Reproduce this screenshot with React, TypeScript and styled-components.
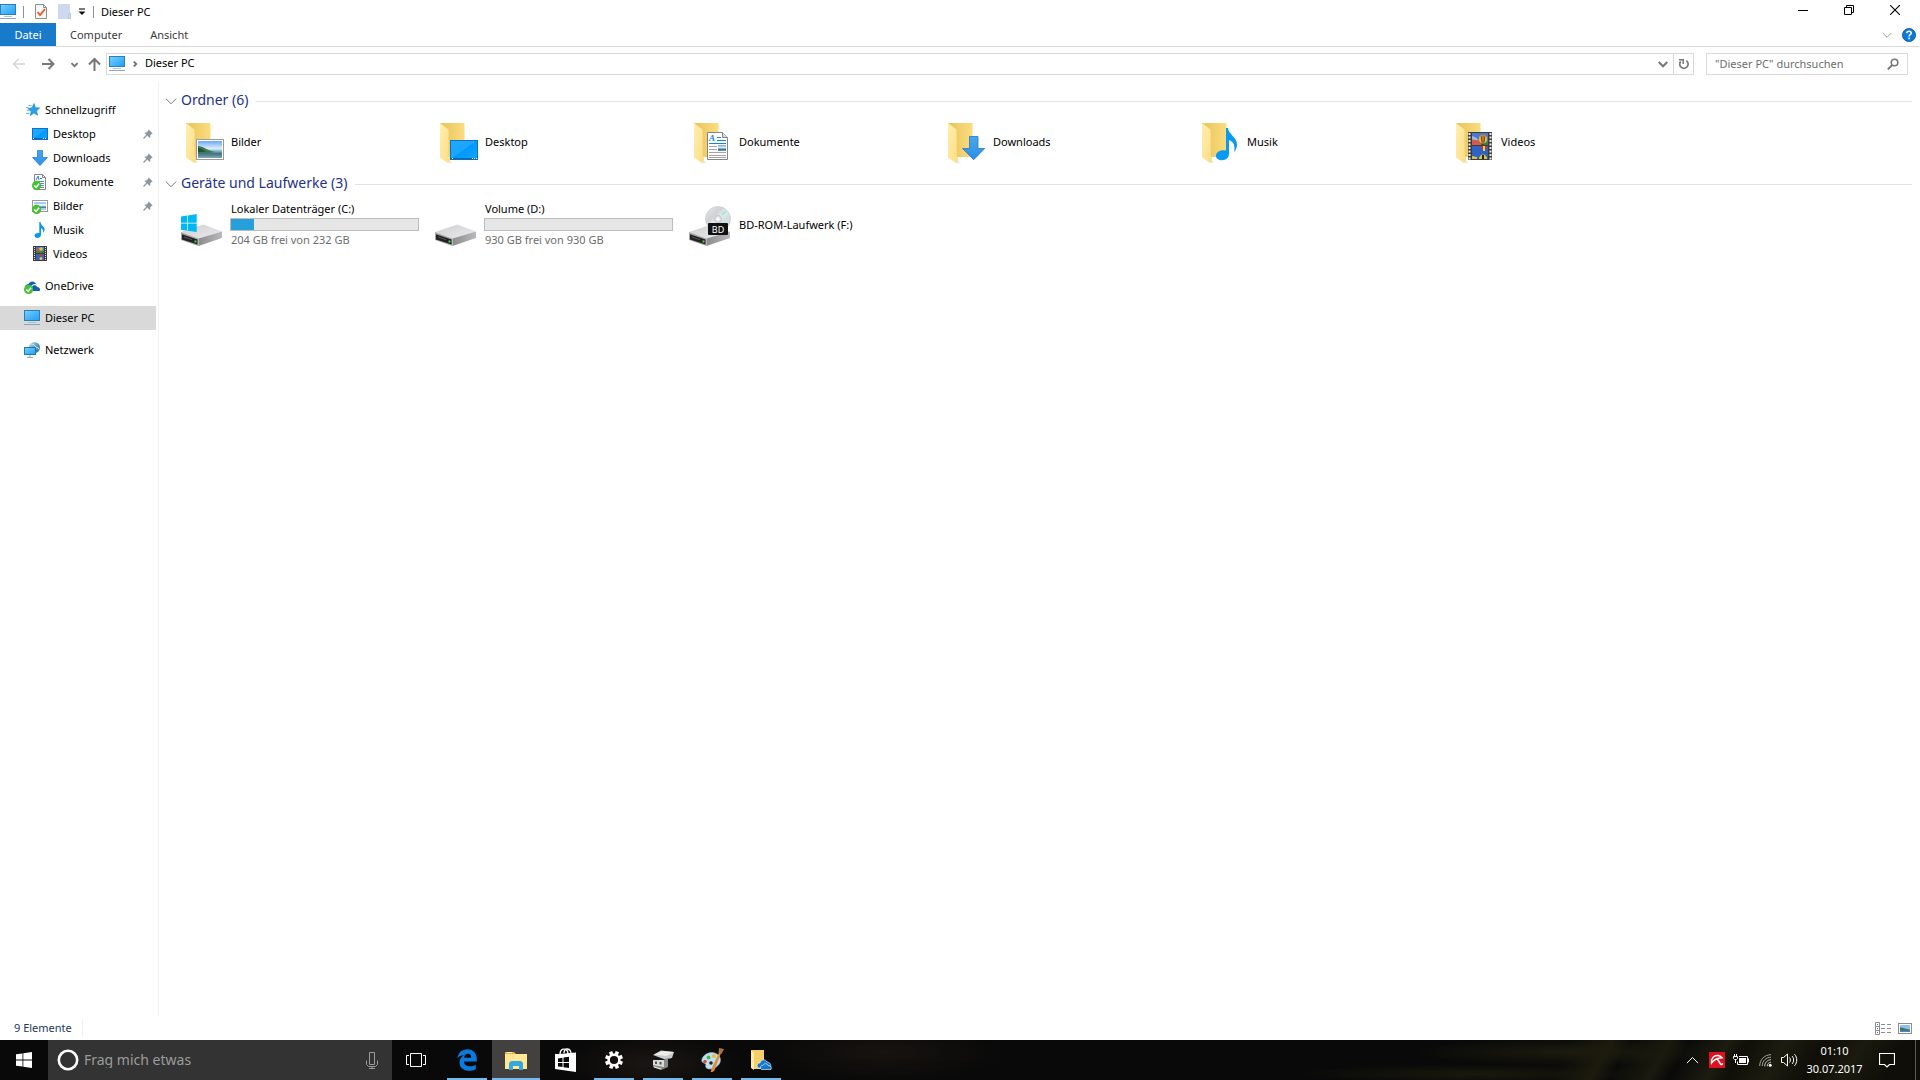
import React, { useState } from 'react';
import styled, { createGlobalStyle } from 'styled-components';

const GlobalStyle = createGlobalStyle`
  *, *::before, *::after { box-sizing: border-box; }
  body { margin: 0; background: #fff; color: #000; font: 11px/16px "Noto Sans", "Open Sans", sans-serif; }
  button, input { font: inherit; color: inherit; margin: 0; padding: 0; border: 0; border-radius: 0; background: none; }
  button { cursor: default; }
  a { color: inherit; text-decoration: none; }
  ul, h1, h2, p { margin: 0; padding: 0; list-style: none; font: inherit; }
  svg { display: block; flex: none; }
`;

/* ---------- layout ---------- */

const Screen = styled.div`
  display: flex;
  flex-direction: column;
  min-height: 100vh;
`;

const Explorer = styled.main`
  flex: 1;
  display: flex;
  flex-direction: column;
`;

const TitleBar = styled.header`
  display: flex;
  align-items: center;
  height: 23px;
`;

const QuickTools = styled.div`
  display: flex;
  align-items: center;
  gap: 7px;
`;

const Divider = styled.span`
  width: 1px;
  height: 12px;
  background: #8f8f8f;
`;

const IconButton = styled.button<{ $w?: number }>`
  display: flex;
  align-items: center;
  justify-content: center;
  width: ${p => (p.$w ? `${p.$w}px` : 'auto')};
  height: 20px;
`;

const WindowTitle = styled.h1`
  padding-left: 7px;
`;

const WindowButtons = styled.div`
  display: flex;
  margin-left: auto;
  padding-right: 2px;
  align-self: flex-start;
`;

const Ribbon = styled.div`
  display: flex;
  height: 24px;
  border-bottom: 1px solid #dadbdc;
`;

const RibbonTab = styled.button<{ $primary?: boolean }>`
  min-width: 56px;
  padding: 0 14px;
  color: ${p => (p.$primary ? '#fff' : '#3b3b3b')};
  background: ${p => (p.$primary ? '#1979ca' : 'transparent')};
`;

const RibbonTools = styled.div`
  display: flex;
  align-items: center;
  gap: 10px;
  margin-left: auto;
  padding-right: 4px;
`;

const AddressRow = styled.div`
  display: flex;
  align-items: center;
  height: 34px;
  padding-right: 12px;
`;

const History = styled.div`
  display: flex;
  align-items: center;
  gap: 10px;
  width: 106px;
  padding-left: 12px;
`;

const AddressBox = styled.div`
  flex: 1;
  display: flex;
  align-items: center;
  height: 22px;
  padding-left: 2px;
  border: 1px solid #d9d9d9;
`;

const Crumbs = styled.nav`
  flex: 1;
  display: flex;
  align-items: center;
  gap: 7px;
`;

const Crumb = styled.a`
  padding-bottom: 2px;
`;

const Refresh = styled(IconButton)`
  border-left: 1px solid #d9d9d9;
`;

const SearchBox = styled.label`
  display: flex;
  align-items: center;
  width: 202px;
  height: 22px;
  margin-left: 12px;
  padding: 0 8px;
  border: 1px solid #d9d9d9;
`;

const SearchInput = styled.input<{ $big?: boolean }>`
  flex: 1;
  min-width: 0;
  outline: none;
  color: ${p => (p.$big ? '#fff' : '#222')};
  font-size: ${p => (p.$big ? '14px' : '11px')};
  &::placeholder { color: ${p => (p.$big ? '#9c9c9c' : '#6d6d6d')}; opacity: 1; }
`;

const Body = styled.div`
  flex: 1;
  display: flex;
`;

const Sidebar = styled.nav`
  width: 159px;
  padding: 17px 2px 0 0;
  border-right: 1px solid #f2f2f2;
`;

const NavGroup = styled.ul`
  margin-bottom: 8px;
`;

const NavLink = styled.a<{ $child?: boolean; $active?: boolean }>`
  display: flex;
  align-items: center;
  height: 24px;
  gap: 5px;
  padding: 0 3px 0 ${p => (p.$child ? '32px' : '24px')};
  background: ${p => (p.$active ? '#d9d9d9' : 'transparent')};
`;

const NavLabel = styled.span`
  flex: 1;
`;

const Content = styled.section`
  flex: 1;
  min-width: 0;
  padding: 8px 8px 0 6px;
`;

const GroupHeader = styled.h2`
  display: flex;
  align-items: center;
  height: 24px;
  gap: 4px;
  color: #1e3287;
  font-size: 14px;
  line-height: 20px;
  &::after { content: ""; flex: 1; height: 1px; margin-left: 4px; background: #e2e2e2; }
`;

const GroupTitle = styled.span`
  padding-bottom: 2px;
`;

const Tiles = styled.div`
  display: grid;
  grid-template-columns: repeat(auto-fill, 254px);
  padding: 5px 0 6px 8px;
`;

const Tile = styled.button`
  display: flex;
  align-items: center;
  gap: 3px;
  height: 48px;
  padding-left: 6px;
  text-align: left;
`;

const TileText = styled.span`
  display: flex;
  flex-direction: column;
  flex: none;
  width: 189px;
`;

const Label = styled.span<{ $muted?: boolean }>`
  padding: 0 0 ${p => (p.$muted ? '2px' : 0)} 1px;
  color: ${p => (p.$muted ? '#6d6d6d' : '#000')};
`;

const Bar = styled.span`
  height: 13px;
  margin: 1px 0;
  border: 1px solid #bcbcbc;
  background: #e6e6e6;
`;

const BarFill = styled.span`
  display: block;
  height: 100%;
  background: #26a0da;
`;

const StatusBar = styled.footer`
  display: flex;
  align-items: center;
  justify-content: space-between;
  height: 24px;
  padding: 0 8px 0 14px;
  color: #1e395b;
`;

const StatusText = styled.span`
  padding-right: 10px;
  border-right: 1px solid #f0f0f0;
`;

const ViewButtons = styled.div`
  display: flex;
  gap: 7px;
`;

/* ---------- taskbar ---------- */

const Taskbar = styled.footer`
  display: flex;
  height: 40px;
  color: #fff;
  background:
    linear-gradient(120deg, transparent 81%, #1c1b0e 83%, transparent 84%, #1b1a0e 86%, transparent 87%, #1d1c10 89%, #100f08 90%, #1d1c10 92%, #0f0e08 94%, #1b1a0f 96%, #0f0e08 98%),
    radial-gradient(ellipse 160px 14px at 82% 30%, #1d1c0e, transparent),
    radial-gradient(ellipse 180px 10px at 77% 85%, #1a190d, transparent),
    radial-gradient(ellipse 90px 30px at 34% 60%, #1b1613, transparent),
    radial-gradient(ellipse 120px 30px at 46% 30%, #17130f, transparent),
    #090909;
`;

const TaskSearch = styled.label`
  display: flex;
  align-items: center;
  width: 344px;
  gap: 5px;
  padding: 0 14px 0 9px;
  background: #333;
`;

const TaskButton = styled.button<{ $open?: boolean; $active?: boolean }>`
  display: flex;
  align-items: center;
  justify-content: center;
  width: 48px;
  background: ${p => (p.$active ? '#424140' : 'transparent')};
  background-image: ${p => (p.$open || p.$active ? 'linear-gradient(#76b9ed, #76b9ed)' : 'none')};
  background-repeat: no-repeat;
  background-position: center bottom;
  background-size: ${p => (p.$active ? '48px 2px' : '40px 2px')};
`;

const Apps = styled.div`
  display: flex;
  gap: 1px;
  margin-left: 3px;
`;

const Tray = styled.div`
  display: flex;
  align-items: center;
  gap: 8px;
  margin-left: auto;
`;

const Clock = styled.time`
  width: 57px;
  line-height: 18px;
  text-align: center;
  white-space: nowrap;
`;

const ActionCenter = styled.button`
  padding: 0 20px 0 8px;
`;

const ShowDesktop = styled.button`
  width: 5px;
  height: 40px;
  border-left: 1px solid #5a5a52;
`;

const Defs = styled.svg`
  position: absolute;
`;

/* ---------- icons ---------- */

type S = { children: React.ReactNode; w?: number; h?: number; box?: string };
const Svg = ({ children, w = 16, h = w, box }: S) => (
  <svg width={w} height={h} viewBox={box ?? `0 0 ${w} ${h}`} fill="none" aria-hidden="true">{children}</svg>
);

const Gradients = () => (
  <Defs width="0" height="0" aria-hidden="true">
    <defs>
      <linearGradient id="screen" x1="0" y1="0" x2="1" y2="1"><stop offset="0" stopColor="#7fd0fb" /><stop offset=".5" stopColor="#49b7fb" /><stop offset="1" stopColor="#219ffa" /></linearGradient>
      <linearGradient id="desk" x1="0" y1="0" x2="1" y2="1"><stop offset="0" stopColor="#22a8ff" /><stop offset=".48" stopColor="#1ba5ff" /><stop offset=".5" stopColor="#0099ff" /><stop offset="1" stopColor="#18a3ff" /></linearGradient>
      <linearGradient id="back" x1="0" y1="0" x2="1" y2="0"><stop offset="0" stopColor="#e8c35a" /><stop offset="1" stopColor="#fbdc7f" /></linearGradient>
      <linearGradient id="flap" x1="0" y1="0" x2="1" y2="1"><stop offset="0" stopColor="#ffefb0" /><stop offset="1" stopColor="#fcdc83" /></linearGradient>
      <linearGradient id="sky" x1="0" y1="0" x2="0" y2="1"><stop offset="0" stopColor="#6ca8f4" /><stop offset=".45" stopColor="#dbeefa" /><stop offset=".6" stopColor="#7fb0c4" /><stop offset=".75" stopColor="#3f7280" /><stop offset="1" stopColor="#7fa9bd" /></linearGradient>
      <linearGradient id="arrow" x1="0" y1="0" x2="0" y2="1"><stop offset="0" stopColor="#4aa5ee" /><stop offset="1" stopColor="#2c8fe6" /></linearGradient>
      <linearGradient id="metal" x1="0" y1="0" x2="1" y2="1"><stop offset="0" stopColor="#cfcfd1" /><stop offset="1" stopColor="#ebebed" /></linearGradient>
      <linearGradient id="side" x1="0" y1="0" x2="1" y2="0"><stop offset="0" stopColor="#8c8c8e" /><stop offset="1" stopColor="#b9b9bb" /></linearGradient>
      <linearGradient id="disc" x1="0" y1="0" x2="1" y2="1"><stop offset="0" stopColor="#e9ecee" /><stop offset=".35" stopColor="#cdd2d4" /><stop offset=".5" stopColor="#efe6f2" /><stop offset=".65" stopColor="#d0e2de" /><stop offset="1" stopColor="#d5d8da" /></linearGradient>
      <linearGradient id="globe" x1="0" y1="0" x2="1" y2="1"><stop offset="0" stopColor="#bfe6f2" /><stop offset=".5" stopColor="#5aa0bd" /><stop offset="1" stopColor="#2d6d92" /></linearGradient>
    </defs>
  </Defs>
);

const Monitor = () => (
  <Svg><rect x=".5" y=".5" width="15" height="10" fill="url(#screen)" stroke="#2a7fb5" /><path d="M4 12.5h8" stroke="#a9c4d6" /><path d="M0 14.5h16" stroke="#8ea5b8" /></Svg>
);
const Chevron = ({ w = 10, color = '#777', sw = 1, dir = 'down' }: { w?: number; color?: string; sw?: number; dir?: 'down' | 'up' | 'right' }) => (
  <Svg w={w} box="0 0 10 10"><path d={dir === 'down' ? 'M.7 3 5 7.3 9.3 3' : dir === 'up' ? 'M.7 7 5 2.7 9.3 7' : 'M3 1l4 4-4 4'} stroke={color} strokeWidth={(sw * 10) / w} /></Svg>
);
const CheckDoc = () => (
  <Svg w={12} h={15}><path d="M.5.5h8l3 3v11H.5z" fill="#f8f8f8" stroke="#8e8e8e" /><path d="M8.500.5v3h3" stroke="#8e8e8e" /><path d="m2.500 8 2.500 3 5-6" stroke="#e8581c" strokeWidth="1.800" /></Svg>
);
const NewFolder = () => <Svg w={13} h={15}><path d="M0 0h12v9h1v6H0z" fill="#ccd9ee" /><path d="M10.500 14.500v-5h2v5z" stroke="#b9cae6" /></Svg>;
const Customize = () => <Svg w={8} h={8}><path d="M1 1h6" stroke="#222" strokeWidth="1.200" /><path d="M.5 3.500h7L4 7z" fill="#111" /></Svg>;
const Arrow = ({ kind }: { kind: 'back' | 'forward' | 'up' }) => (
  <Svg w={13} h={14}>
    <path d={kind === 'back' ? 'M13 7H1.500M6.500 2 1.500 7l5 5' : kind === 'forward' ? 'M0 7h11.500M6.500 2l5 5-5 5' : 'M6.500 14V2M1 7.500l5.500-5.500L12 7.500'} stroke={kind === 'back' ? '#d5d5d5' : '#777'} strokeWidth={kind === 'back' ? 1.5 : 2} />
  </Svg>
);
const ReloadIcon = () => <Svg w={12}><path d="M8.300 2.600A4.200 4.200 0 1 1 2.700 3.400" stroke="#777" strokeWidth="1.700" /><path d="M1 1.800h4.200V6" stroke="#777" strokeWidth="1.500" /></Svg>;
const Magnifier = () => <Svg w={12}><circle cx="7.500" cy="4.500" r="3.300" stroke="#777" strokeWidth="1.600" /><path d="M5.200 7 .8 11.400" stroke="#777" strokeWidth="1.900" /></Svg>;
const Help = () => <Svg w={14}><circle cx="7" cy="7" r="6.600" fill="#0f78d4" stroke="#0a5ca8" strokeWidth=".8" /><path d="M4.900 5.200c0-2.600 4.300-2.600 4.300 0 0 1.500-2.100 1.500-2.100 3.200M7.100 9.600v1.600" stroke="#fff" strokeWidth="1.500" /></Svg>;
const Minimize = () => <Svg w={10}><path d="M0 5.500h10" stroke="#000" /></Svg>;
const Restore = () => <Svg w={10}><path d="M.5 2.500h7v7h-7zM2.500 2.500v-2h7v7h-2" stroke="#000" /></Svg>;
const Close = () => <Svg w={10}><path d="m0 0 10 10M10 0 0 10" stroke="#000" strokeWidth="1.100" /></Svg>;
const Pin = () => <Svg w={10}><path d="M5.500.3 9.700 4.500 8.500 5 7.300 6.200c.3 1.200 0 2-.5 2.700L1.500 4c.8-.8 1.700-1 2.600-.8L5.200 1.800z" fill="#8b969e" /><path d="M4 6 0.500 9.500" stroke="#8b969e" strokeWidth="1.200" /></Svg>;

const Star = () => (
  <Svg><path d="m10 1.500 1.500 4.200 4.200.2-3.100 3 1 4.400-3.800-2.200-3.500 2.700.9-4.500L3.800 6.600l4.200-.8z" fill="#2aa0ea" stroke="#1c83cb" strokeWidth=".6" /><path d="M4.500 3.500h3M2 5.500h2.500M3 8.500h2.500M2 11.500h3.500" stroke="#67b7e8" /></Svg>
);
const DesktopSmall = () => <Svg><rect x=".5" y="2.500" width="15" height="11" fill="url(#desk)" stroke="#0a72c0" /><path d="M1 12.500h14" stroke="#0b69b1" /><path d="M1 12.500h1M11 12.500h1m1 0h1" stroke="#fff" /></Svg>;
const DownSmall = () => <Svg><path d="M5.500.5h5v7h5L8 15.500.5 7.500h5z" fill="url(#arrow)" stroke="#2b7fcb" strokeWidth=".8" /></Svg>;
const Badge = () => <><circle cx="4.600" cy="11.400" r="4.600" fill="#46c132" /><path d="m2.300 11.400 1.800 1.900 3-3.600" stroke="#fff" strokeWidth="1.500" /></>;
const DocSmall = () => (
  <Svg><path d="M2.500.5h8l3 3v12h-11z" fill="#fdfdfd" stroke="#858585" /><path d="M10.500.5v3h3" stroke="#858585" /><path d="m4 6 2-4 1 4M8 4.500h2" stroke="#1f87d5" /><path d="M4 7.500h8M8 9.500h4M8 11.500h4M8 13.500h4" stroke="#5790c0" /><Badge /></Svg>
);
const PicSmall = () => <Svg><rect x=".5" y="2.500" width="15" height="11" fill="#fff" stroke="#9a9a9a" /><path d="M2 4h12v8H2z" fill="#a9ccf7" /><path d="M2 6h12v2H2z" fill="#e2eefb" /><path d="M6 8.500h8V10H6z" fill="#4d7f9a" /><Badge /></Svg>;
const NoteSmall = () => <Svg><path d="M7.300 0h1.300c.2 3.600 4 4.400 4 7.600 0 1.500-.7 2.700-1.400 3.400.5-2.400-.4-4-2.200-4.700v6.400c0 1.700-1.500 3.200-3.600 3.200-1.700 0-2.900-.9-2.900-2.300 0-1.700 1.900-3.100 4.800-2.600z" fill="#0a98ef" /></Svg>;
const VideoSmall = () => (
  <Svg><rect x="1" y="0" width="14" height="15" fill="#3a3a3a" /><path d="M2.500 1v14M13.500 1v14" stroke="#e8e8e8" strokeDasharray="1 1" /><rect x="4" y="1" width="8" height="6" fill="#4c7ad3" /><rect x="4" y="8" width="8" height="6" fill="#3563bf" /><path d="M4 6h8" stroke="#3b8a3a" strokeWidth="2" /><circle cx="9" cy="3" r="1.800" fill="#e9c72c" /><path d="M4 4h3" stroke="#d55335" strokeWidth="2" /><circle cx="9" cy="9" r="1.500" fill="#c43a34" /><circle cx="9" cy="12.500" r="1.500" fill="#e9c72c" /></Svg>
);
const OneDrive = () => <Svg><path d="M2 11C0 9 2 5.800 4.600 6c1-3.300 6.200-3.500 7.400 0-3-.2-5 1.300-5.500 3.500z" fill="#0a62bd" /><path d="M6 13c-1.500-2.200 0-3.900 1.800-3.800.8-2.800 4.600-2.600 5.300-.3 2.800.2 3.500 2.800 2.500 4.100z" fill="#0a62bd" /><Badge /></Svg>;
const Network = () => <Svg><circle cx="10.500" cy="5.500" r="5.500" fill="url(#globe)" /><path d="M7 2c2 1 3 0 4 2s3 1 4 3" stroke="#d5eef4" strokeWidth="1" /><rect x=".5" y="5.500" width="11" height="7" fill="url(#screen)" stroke="#2676ad" /><path d="M3 15.500h6M6 13v2" stroke="#8ea5b8" /></Svg>;

const Folder = ({ children }: { children: React.ReactNode }) => (
  <Svg w={48}>
    <path d="M15 45h4l-3-4z" fill="#e6e6e6" />
    <path d="M7 5h24.500v34H7z" fill="url(#back)" />
    <path d="m7 5 8.500 6.500.3 28 1.200-.5v3l-2 3L7 39.500z" fill="url(#flap)" />
    {children}
  </Svg>
);
const Pictures = () => <Folder><rect x="17.500" y="21.500" width="27" height="20" fill="#fff" stroke="#9b9b9b" /><rect x="19" y="23" width="24" height="17" fill="url(#sky)" /><path d="M19 28c5 0 8 4 17 6-6 1.500-12 1.500-17 1z" fill="#3e7850" /><path d="M19 30c3 0 5 2 8 4h-8z" fill="#24513a" /></Folder>;
const DesktopBig = () => <Folder><rect x="17.500" y="22.500" width="27" height="19" fill="url(#desk)" stroke="#0a72c0" /><path d="M18 40.500h26" stroke="#0c67ae" /><path d="M19 40.500h1M39 40.500h1m1 0h1m1 0h1" stroke="#fff" /></Folder>;
const Documents = () => (
  <Folder>
    <path d="M20.500 14.500h15l5 5v22h-20z" fill="#fcfcfc" stroke="#858585" /><path d="M35.500 14.500v5h5" fill="#ddd" stroke="#858585" />
    <text x="22" y="23" fill="#1286d8" fontSize="9" fontWeight="bold" fontStyle="italic" fontFamily="Liberation Serif, serif">A</text>
    <path d="M30 19.500h4M30 22.500h9M22 25.500h17" stroke="#1286d8" /><path d="M22 28.500h8M22 31.500h8M22 34.500h17M22 37.500h17M22 39.500h17" stroke="#a5a5a5" /><rect x="31" y="27" width="8" height="6" fill="url(#sky)" />
  </Folder>
);
const Downloads = () => <Folder><path d="M28.500 18.500h8.500v12h6.700L32.700 41.700 21.500 30.500h7z" fill="url(#arrow)" stroke="#2478c2" strokeWidth=".8" /></Folder>;
const Music = () => <Folder><path d="M31 10h2c.5 6.500 9 9 9 16.500 0 3-1.200 6-3 7.500 1.500-6-.5-10.500-5-12v14c0 3.500-3 6.200-7 6.200-3.500 0-6-1.700-6-4.500 0-3.500 4-6.200 10-5.200z" fill="#0a9af2" /></Folder>;
const Videos = () => (
  <Folder>
    <g transform="translate(-1)">
      <path d="M20 14h24v28H20z" fill="#3c3c3c" /><path d="M21.500 15v27M42.500 15v27" stroke="#eee" strokeWidth="2" strokeDasharray="2 1.500" />
      <path d="M24 15h16v12H24z" fill="#4a78d0" /><path d="M24 28h16v13H24z" fill="#2e63c4" /><path d="M33 24.500c3 0 5 0 7-1V27h-7z" fill="#368341" /><path d="m24 21 5 .5 4 2.500v3h-9z" fill="#d9584e" /><path d="m24 18 4 1.500 3 3-7-1z" fill="#9fb9dc" />
      <ellipse cx="35" cy="21" rx="4" ry="4.200" fill="#e8c62a" /><path d="M35 17v8M33 17.500l1 7M37 17.500l-1 7" stroke="#8a3230" /><path d="M34 26h2v2h-2z" fill="#5a3b20" />
      <path d="M32 28h8l-3 4h-2z" fill="#c9353a" /><path d="M35 28h2v5h-2z" fill="#ecd23a" /><path d="M31 41c0-6 8-6 8 0z" fill="#e8c62a" /><path d="M35 37v4" stroke="#222" strokeWidth="2" /><path d="m24 38 5 1v2h-5z" fill="#d9c050" />
    </g>
  </Folder>
);
const DriveBody = () => (
  <>
    <path d="M2 31 24.500 23.500 43 30.500 19.500 37.500z" fill="url(#metal)" />
    <path d="M19.500 37.500 43 30.500V37L19.500 45z" fill="url(#side)" />
    <path d="m2 31 17.500 6.500V45L2 39z" fill="#a8a8aa" /><path d="m3 33.300 15.500 5.200v5L3 38.500z" fill="#222" /><path d="m5 36 8 2.700" stroke="#555" /><path d="M15.500 39.500h2v2h-2z" fill="#3ee04b" />
  </>
);
const SystemDrive = () => <Svg w={48}><DriveBody /><path d="m2 15.500 6.300-1v7.300H2zM9 14.400l8.700-1.400v8.800H9zM2 22.500h6.300v7.200L2 28.800zM9 22.500h8.700V31L9 29.800z" fill="#00b8f4" /></Svg>;
const Drive = () => <Svg w={48}><DriveBody /></Svg>;
const BdDrive = () => (
  <Svg w={48}>
    <DriveBody />
    <circle cx="31" cy="18" r="12.500" fill="url(#disc)" stroke="#bfc3c5" strokeWidth=".6" /><path d="m35 14 4-4" stroke="#8ff0d4" strokeWidth="2" /><circle cx="31" cy="18" r="3.500" fill="#dfe2e4" stroke="#b5b9bb" strokeWidth=".7" /><circle cx="31" cy="18" r="1.500" fill="#fff" />
    <rect x="21" y="22" width="20" height="12" rx="1" fill="#111" /><text x="31" y="31.500" textAnchor="middle" fontSize="9" fill="#fff" fontFamily="Noto Sans, sans-serif">BD</text>
  </Svg>
);

const DetailsView = () => (
  <Svg w={16} h={13}><path d="M.5.5h4v12h-4zM.5 4.500h4M.5 8.500h4" stroke="#8c8c8c" /><path d="M2 2.500h1M2 6.500h1" stroke="#3b79c6" /><path d="M2 10.500h1" stroke="#d33" /><path d="M6 2.500h4M12 2.500h4M6 6.500h4M12 6.500h4M6 10.500h4M12 10.500h4" stroke="#8c8c8c" /></Svg>
);
const TilesView = () => <Svg w={14} h={13}><rect x=".5" y="1.500" width="13" height="10" fill="#fff" stroke="#8c8c8c" /><path d="M2 3h10v7H2z" fill="#8fbdf5" /><path d="M2 5.500c3 0 5 1.500 10 2V9H2z" fill="#3e7850" /><path d="M2 8.500h10V10H2z" fill="#4f83c4" /></Svg>;

const WinLogo = () => <Svg><path d="m0 2.300 6.500-.9v6.200H0zM7.300 1.200 16 0v7.600H7.300zM0 8.400h6.500v6.200L0 13.700zM7.300 8.400H16V16l-8.700-1.200z" fill="#fff" /></Svg>;
const CortanaRing = () => <Svg w={22}><circle cx="11" cy="11" r="9.200" stroke="#fff" strokeWidth="2.600" /></Svg>;
const Mic = () => <Svg w={12} h={17}><path d="M3.500.5h5v12h-5zM.5 8.500v4l2 2h7l2-2v-4M6 14.500v2M3 16.500h6" stroke="#9a9a9a" /></Svg>;
const TaskViewIcon = () => <Svg w={20} h={14}><path d="M4.500.5h11v13h-11zM3 2.500H.5v9H3M17 2.500h2.500v9H17" stroke="#fff" /></Svg>;
const Edge = () => <Svg w={20} h={22}><path d="M.3 9.300C1 4.200 4.800.3 10.300.3 16 .3 19.800 4.500 19.800 9.800v2.700H7c.2 3.500 3 4.800 6.100 4.800 2 0 4-.5 5.700-1.500v4.400c-2 1.100-4.500 1.600-6.700 1.600C6.800 21.800 2.500 18.700 2.500 13.500c0-3.200 1.700-6 4.700-7.600-4 .3-5.700 2-6.900 3.400zM7.100 8.700h7.100c0-2.400-1.200-3.900-3.400-3.900S7.300 6.400 7.100 8.700z" fill="#0a7bdc" /></Svg>;
const ExplorerIcon = () => <Svg w={22} h={19}><path d="M0 1h9l2 2h11v15H0z" fill="#e4b840" /><path d="M0 3h22v15H0z" fill="#ffe794" /><path d="M2 1.500h5" stroke="#fff3be" /><path d="M4 19v-7l2-2h10l2 2v7h-4v-4H8v4z" fill="#35a9df" /></Svg>;
const Store = () => <Svg w={21} h={24}><path d="M5 6c0-7 8-6 8 0M9 5c0-6 7-5 7 1" stroke="#fff" strokeWidth="1.300" /><path d="M0 6h4l17-1.500V24L0 21z" fill="#fff" /><path d="m3 10.500 4.500-.7V14H3zM8.500 9.600l5.500-.9V14H8.500zM3 15h4.500v4L3 18.500zM8.500 15H14v5l-5.500-.8z" fill="#080808" /></Svg>;
const Gear = () => (
  <Svg w={18}><circle cx="9" cy="9" r="5.300" stroke="#fff" strokeWidth="2.400" />{[0, 45, 90, 135, 180, 225, 270, 315].map(a => <path key={a} d="M7.200 3.200V0h3.600v3.200z" fill="#fff" transform={`rotate(${a + 22} 9 9)`} />)}</Svg>
);
const Printer = () => <Svg w={22} h={20}><path d="m1 5 8-4.500L22 2l-2 6-7 1.500z" fill="#c9cacb" /><path d="m2 4.500 8-3.500 12 1-8 4z" fill="#eceded" /><path d="M1 10h11l4-2v9l-7 3-8-3z" fill="#8a8b8c" /><path d="M1 10h11v7L1 15z" fill="#d9dadb" /><path d="M4 11.500v2.500M8.500 12v2.500" stroke="#555" strokeWidth="2" /><path d="m2 17 7 2" stroke="#eee" /></Svg>;
const Paint = () => (
  <Svg w={24}><path d="M2 11C4 5.500 11 3 16 5.500s6 8 2 12-10 4.500-12 2c-1-1.500.5-3-1-4S1 14.500 2 11z" fill="#bfe0ef" stroke="#84b4cf" strokeWidth=".6" /><circle cx="5" cy="13.500" r="1.700" fill="#e2443f" /><circle cx="8.500" cy="9.500" r="2" fill="#49b848" /><circle cx="14" cy="8" r="2" fill="#f1b92f" /><circle cx="11" cy="15" r="1.800" fill="#222" /><path d="m20 5-6.500 17-1.500 1 .5-2z" stroke="#e08c3a" strokeWidth="2" /><path d="m19 0 5 1-2.500 5-3-1z" fill="#a8704a" /></Svg>
);
const FolderCloud = () => <Svg w={22} h={21}><path d="M1 0h13v19H4z" fill="#f3cf68" /><path d="m1 0 3 3v17l-3-2z" fill="#ffeaa6" /><path d="M8 18c-2-3 0-5.500 2-5 1-4 6-4 7-1 3 0 4.500 3 3.500 6z" fill="#1377cc" stroke="#fff" strokeWidth=".6" /><path d="M11.500 19.500c-2.500-2.500 0-4.500 1.500-4 .8-2.500 4.500-2.300 5 0 3-.2 4 2.500 3 4z" fill="#1377cc" stroke="#fff" strokeWidth=".6" /></Svg>;

const Umbrella = () => <Svg><rect width="16" height="16" fill="#e01020" /><path d="M2.500 11C2 6 5 3 9 3.500c1.500.2 3 1 4 2.300C9 6 5 7.500 2.500 11z" stroke="#fff" strokeWidth="1.400" /><path d="m8 6.500 3.500 5.500c.8 1 2 .5 2-.7" stroke="#fff" strokeWidth="1.500" /></Svg>;
const Battery = () => <Svg><path d="M6 4.500h8.500v8h-10V9.500" stroke="#fff" /><path d="M6 6h7v5H6z" fill="#fff" /><path d="M15.500 6.500v4M1.500 2v2M3.500 2v2M2.500 7v4" stroke="#fff" /><path d="M.5 4.500h4v2l-1 1h-2l-1-1z" stroke="#fff" /></Svg>;
const Wifi = () => <Svg w={13} h={14}><path d="M.7 13C.8 6.500 5.500 1.700 12 1.700M3.200 13C3.300 8 7 4.300 12 4.200" stroke="#a5a5a0" /><path d="M5.700 13.300c0-3.700 2.800-6.500 6.300-6.600M8.200 13.300c0-2.300 1.600-4 3.800-4.100" stroke="#ccc" /><circle cx="11.200" cy="12.300" r="1.500" fill="#fff" /></Svg>;
const Speaker = () => <Svg w={17} h={14}><path d="M.5 4.500h2L6.500 1v12l-4-3.500h-2z" stroke="#fff" /><path d="M8.500 4.500c1.200 1.500 1.200 3.500 0 5M11 3c2.200 2.400 2.200 5.600 0 8M13.500 1.200c3 3.500 3 8.100 0 11.600" stroke="#fff" /></Svg>;
const Message = () => <Svg w={16}><path d="M.5 1.500h15v11h-5L8 15l-2.500-2.500h-5z" stroke="#fff" strokeWidth="1.200" /></Svg>;

/* ---------- data ---------- */

type NavEntry = { name: string; Icon: React.FC; child?: boolean; pinned?: boolean };
const navGroups: NavEntry[][] = [
  [
    { name: 'Schnellzugriff', Icon: Star },
    { name: 'Desktop', Icon: DesktopSmall, child: true, pinned: true },
    { name: 'Downloads', Icon: DownSmall, child: true, pinned: true },
    { name: 'Dokumente', Icon: DocSmall, child: true, pinned: true },
    { name: 'Bilder', Icon: PicSmall, child: true, pinned: true },
    { name: 'Musik', Icon: NoteSmall, child: true },
    { name: 'Videos', Icon: VideoSmall, child: true },
  ],
  [{ name: 'OneDrive', Icon: OneDrive }],
  [{ name: 'Dieser PC', Icon: Monitor }],
  [{ name: 'Netzwerk', Icon: Network }],
];

const folders = [
  { name: 'Bilder', Icon: Pictures },
  { name: 'Desktop', Icon: DesktopBig },
  { name: 'Dokumente', Icon: Documents },
  { name: 'Downloads', Icon: Downloads },
  { name: 'Musik', Icon: Music },
  { name: 'Videos', Icon: Videos },
];

const drives: { name: string; Icon: React.FC; free?: number; total?: number }[] = [
  { name: 'Lokaler Datenträger (C:)', Icon: SystemDrive, free: 204, total: 232 },
  { name: 'Volume (D:)', Icon: Drive, free: 930, total: 930 },
  { name: 'BD-ROM-Laufwerk (F:)', Icon: BdDrive },
];

const apps: { name: string; Icon: React.FC; open?: boolean; active?: boolean }[] = [
  { name: 'Microsoft Edge', Icon: Edge, open: true },
  { name: 'Explorer', Icon: ExplorerIcon, active: true },
  { name: 'Store', Icon: Store },
  { name: 'Einstellungen', Icon: Gear, open: true },
  { name: 'Drucker', Icon: Printer, open: true },
  { name: 'Paint', Icon: Paint, open: true },
  { name: 'OneDrive-Ordner', Icon: FolderCloud, open: true },
];

export default function App() {
  const [active, setActive] = useState('Dieser PC');
  return (
    <Screen>
      <GlobalStyle />
      <Gradients />
      <Explorer>
        <TitleBar>
          <QuickTools>
            <Monitor />
            <Divider />
            <IconButton $w={20} aria-label="Eigenschaften"><CheckDoc /></IconButton>
            <IconButton aria-label="Neuer Ordner"><NewFolder /></IconButton>
            <IconButton aria-label="Symbolleiste anpassen"><Customize /></IconButton>
            <Divider />
          </QuickTools>
          <WindowTitle>Dieser PC</WindowTitle>
          <WindowButtons>
            <IconButton $w={46} aria-label="Minimieren"><Minimize /></IconButton>
            <IconButton $w={46} aria-label="Verkleinern"><Restore /></IconButton>
            <IconButton $w={46} aria-label="Schließen"><Close /></IconButton>
          </WindowButtons>
        </TitleBar>
        <Ribbon>
          <RibbonTab $primary>Datei</RibbonTab>
          <RibbonTab>Computer</RibbonTab>
          <RibbonTab>Ansicht</RibbonTab>
          <RibbonTools>
            <IconButton aria-label="Menüband erweitern"><Chevron color="#999" /></IconButton>
            <IconButton aria-label="Hilfe"><Help /></IconButton>
          </RibbonTools>
        </Ribbon>
        <AddressRow>
          <History>
            <IconButton aria-label="Zurück"><Arrow kind="back" /></IconButton>
            <IconButton $w={26} aria-label="Vorwärts"><Arrow kind="forward" /></IconButton>
            <IconButton aria-label="Verlauf"><Chevron w={7} sw={2} /></IconButton>
            <IconButton aria-label="Nach oben"><Arrow kind="up" /></IconButton>
          </History>
          <AddressBox>
            <Crumbs aria-label="Adresse">
              <Monitor />
              <Chevron w={6} sw={2} dir="right" />
              <Crumb href="#pc">Dieser PC</Crumb>
            </Crumbs>
            <IconButton $w={20} aria-label="Vorherige Orte"><Chevron w={10} sw={2} /></IconButton>
            <Refresh $w={20} aria-label="Aktualisieren"><ReloadIcon /></Refresh>
          </AddressBox>
          <SearchBox>
            <SearchInput type="text" aria-label="Suchen" placeholder={'"Dieser PC" durchsuchen'} />
            <Magnifier />
          </SearchBox>
        </AddressRow>
        <Body>
          <Sidebar aria-label="Navigation">
            {navGroups.map(group => (
              <NavGroup key={group[0].name}>
                {group.map(({ name, Icon, child, pinned }) => (
                  <li key={name}>
                    <NavLink href="#nav" $child={child} $active={active === name} onClick={() => setActive(name)}>
                      <Icon />
                      <NavLabel>{name}</NavLabel>
                      {pinned && <Pin />}
                    </NavLink>
                  </li>
                ))}
              </NavGroup>
            ))}
          </Sidebar>
          <Content>
            <GroupHeader><Chevron w={12} /><GroupTitle>Ordner (6)</GroupTitle></GroupHeader>
            <Tiles>
              {folders.map(({ name, Icon }) => (
                <Tile key={name}><Icon /><TileText><Label>{name}</Label></TileText></Tile>
              ))}
            </Tiles>
            <GroupHeader><Chevron w={12} /><GroupTitle>Geräte und Laufwerke (3)</GroupTitle></GroupHeader>
            <Tiles>
              {drives.map(({ name, Icon, free, total }) => (
                <Tile key={name}>
                  <Icon />
                  <TileText>
                    <Label>{name}</Label>
                    {free !== undefined && total !== undefined && (
                      <>
                        <Bar><BarFill style={{ width: `${(1 - free / total) * 100}%` }} /></Bar>
                        <Label $muted>{free} GB frei von {total} GB</Label>
                      </>
                    )}
                  </TileText>
                </Tile>
              ))}
            </Tiles>
          </Content>
        </Body>
        <StatusBar>
          <StatusText>9 Elemente</StatusText>
          <ViewButtons>
            <IconButton aria-label="Details"><DetailsView /></IconButton>
            <IconButton aria-label="Große Symbole"><TilesView /></IconButton>
          </ViewButtons>
        </StatusBar>
      </Explorer>
      <Taskbar>
        <TaskButton aria-label="Start"><WinLogo /></TaskButton>
        <TaskSearch>
          <CortanaRing />
          <SearchInput $big type="text" aria-label="Cortana" placeholder="Frag mich etwas" />
          <Mic />
        </TaskSearch>
        <TaskButton aria-label="Aktive Anwendungen"><TaskViewIcon /></TaskButton>
        <Apps>
          {apps.map(({ name, Icon, open, active: on }) => (
            <TaskButton key={name} aria-label={name} $open={open} $active={on}><Icon /></TaskButton>
          ))}
        </Apps>
        <Tray>
          <IconButton $w={17} aria-label="Ausgeblendete Symbole"><Chevron w={13} color="#fff" sw={1} dir="up" /></IconButton>
          <IconButton aria-label="Avira"><Umbrella /></IconButton>
          <IconButton aria-label="Akku"><Battery /></IconButton>
          <IconButton $w={16} aria-label="WLAN"><Wifi /></IconButton>
          <IconButton aria-label="Lautstärke"><Speaker /></IconButton>
          <Clock dateTime="2017-07-30T01:10">01:10<br />30.07.2017</Clock>
          <ActionCenter aria-label="Info-Center"><Message /></ActionCenter>
        </Tray>
        <ShowDesktop aria-label="Desktop anzeigen" />
      </Taskbar>
    </Screen>
  );
}
